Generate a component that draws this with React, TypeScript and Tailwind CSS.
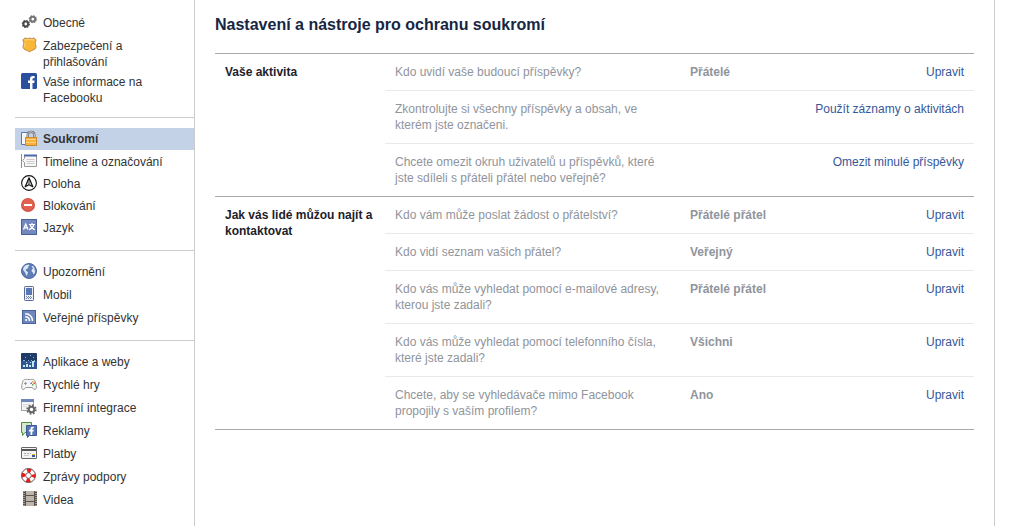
import type { ReactNode } from "react";

type NavItem = {
  label: string;
  icon: ReactNode;
  active?: boolean;
};

type Setting = {
  question: string;
  value?: string;
  action: string;
};

type SettingGroup = {
  title: string;
  settings: Setting[];
};

const Icon = ({ children }: { children: ReactNode }) => (
  <svg viewBox="0 0 16 16" className="-mt-px h-4 w-4 shrink-0" aria-hidden="true">
    {children}
  </svg>
);

const GearsIcon = () => (
  <Icon>
    <circle cx="4.8" cy="10" r="2.4" fill="none" stroke="#4c4c4c" strokeWidth="2" />
    <circle cx="4.8" cy="10" r="3.5" fill="none" stroke="#4c4c4c" strokeWidth="1.2" strokeDasharray="1.5 1.25" />
    <circle cx="11.8" cy="5.2" r="2.4" fill="none" stroke="#747474" strokeWidth="2" />
    <circle cx="11.8" cy="5.2" r="3.5" fill="none" stroke="#747474" strokeWidth="1.2" strokeDasharray="1.5 1.25" />
  </Icon>
);

const ShieldIcon = () => (
  <Icon>
    <path
      d="M4 .8 6 1.9 8.500 1 11 1.900 13 .8 15.200 3 14.200 5C14 7 15.300 8.500 14.900 10.500 14.300 13 11 12.800 8.500 14.800 6 12.800 2.700 13 2.100 10.500 1.700 8.500 3 7 2.800 5L1.800 3Z"
      fill="#f9b838"
      stroke="#c08a45"
      strokeLinejoin="round"
    />
    <path d="M3.500 3 8.500 2.500 13.500 3" fill="none" stroke="#fdd684" />
    <path d="M4 5.500C4 8 3.300 8.500 3.300 10" fill="none" stroke="#fdd684" />
  </Icon>
);

const FacebookIcon = () => (
  <Icon>
    <rect width="16" height="16" rx="1.5" fill="#2a4f9e" />
    <path d="M9 16V10H7V7.600H9V6C9 3.800 10.200 3 12 3H13.600V5.300H12.500C11.700 5.300 11.500 5.700 11.500 6.300V7.600H13.600L13.300 10H11.500V16Z" fill="#fff" />
  </Icon>
);

const LockIcon = () => (
  <Icon>
    <path d="M.5 2.500H7.500V14.500H.5Z" fill="#f3f6fb" stroke="#5b78b5" />
    <path d="M6.700 8V5C6.700 .8 13.300 .8 13.300 5V8" fill="none" stroke="#6b6b6b" strokeWidth="2.4" />
    <path d="M6.700 8V5C6.700 .8 13.300 .8 13.300 5V8" fill="none" stroke="#ddd" strokeWidth=".9" />
    <rect x="4.5" y="7.5" width="11" height="8" fill="#fbb03b" stroke="#c88a30" />
    <path d="M5 9.500H15M5 12.500H15" stroke="#fdd07f" />
  </Icon>
);

const TimelineIcon = () => (
  <Icon>
    <path d="M.5 1V15" stroke="#7b90c0" />
    <path d="M3.500 2.500H15.500V13.500H3.500V9.500L1.500 7.500 3.500 5.500Z" fill="#f7f7f7" stroke="#999" />
    <path d="M3 2.500H16" stroke="#4a67a8" strokeWidth="2" />
    <path d="M5.500 6.500H13.500M5.500 8.500H13.500M5.500 10.500H13.500" stroke="#ccc" />
  </Icon>
);

const LocationIcon = () => (
  <Icon>
    <circle cx="8" cy="8" r="7.4" fill="#fff" stroke="#111" strokeWidth="1.1" />
    <path d="M8 2.800 11.800 11.800 8 9.800 4.200 11.800Z" fill="#ddd" stroke="#111" strokeWidth="1.2" strokeLinejoin="round" />
    <path d="M8 4V9.500" stroke="#111" strokeWidth=".8" />
  </Icon>
);

const BlockIcon = () => (
  <Icon>
    <circle cx="7" cy="8" r="7" fill="#d65445" />
    <circle cx="7" cy="7.6" r="5.8" fill="#e2604e" />
    <rect x="3" y="7" width="8" height="2" fill="#fff" />
  </Icon>
);

const LanguageIcon = () => (
  <Icon>
    <rect x=".5" y=".5" width="15" height="15" fill="#7388bd" stroke="#47619f" />
    <path d="M2.500 10.500 4.700 5.200 7 10.500M3.500 8.800H6" fill="none" stroke="#fff" strokeWidth="1.3" />
    <path d="M8 5.500H14M11 4V5.500M9.300 6C10 8.500 11.500 9.800 13.800 10.800M12.700 6C12 8.500 10.500 9.800 8 10.800" fill="none" stroke="#fff" strokeWidth="1.1" />
  </Icon>
);

const GlobeIcon = () => (
  <Icon>
    <circle cx="8" cy="8" r="7.5" fill="#5f7db5" stroke="#4a679f" />
    <path d="M2.500 4.500 4.500 2.300 8 1.500 8.500 2.500 7 3.500 7.500 5 5.500 6 4.500 7 6 8.500 7 9.500 6.500 11 5.800 13 4.800 11 3.800 9 2 7Z" fill="#dfe7f3" />
    <path d="M10.500 3 12 3 13.800 5.500 13 6.200 14.300 7.500 13.800 10 12.500 11.500 11.800 9.500 10.500 8.300 10.800 6.500 12 5.500Z" fill="#dfe7f3" />
  </Icon>
);

const PhoneIcon = () => (
  <Icon>
    <rect x="3.5" y=".5" width="9" height="14" rx=".8" fill="#eef1f6" stroke="#5a6c93" />
    <rect x="5" y="2" width="6" height="7" fill="#5878b3" />
    <path d="M5 10.500H11M5 12.500H11" stroke="#7585a5" strokeDasharray="1 1" />
    <path d="M6 11.500H11" stroke="#7585a5" strokeDasharray="1 1" />
  </Icon>
);

const FeedIcon = () => (
  <Icon>
    <rect x="1.5" y="1.5" width="13" height="13" fill="#6f87bd" stroke="#47619f" />
    <circle cx="5.2" cy="11" r="1.1" fill="#fff" />
    <path d="M4.200 7.700C6.800 7.700 8.500 9.400 8.500 12M4.200 4.700C8.500 4.700 11.500 7.700 11.500 12" fill="none" stroke="#fff" strokeWidth="1.4" />
  </Icon>
);

const AppsIcon = () => (
  <Icon>
    <rect width="16" height="16" rx="1" fill="#203b68" />
    <rect y="8" width="16" height="8" fill="#2d578d" />
    <path
      d="M9 2H10V3H9ZM4 4H5V5H4ZM12 4H13V5H12ZM2 7H4V8H2ZM7 7H8V8H7ZM10 7H11V8H10ZM13 7H14V8H13Z"
      fill="#83b7df"
    />
    <path d="M2 12H4V14H2ZM5 11H7V14H5ZM5 9H6V10H5ZM8 12H10V14H8ZM9 9H10V10H9ZM11 8H14V9H13V14H11Z" fill="#c5e5f7" />
  </Icon>
);

const GamepadIcon = () => (
  <Icon>
    <path
      d="M4 3.500C5 2.800 5.500 3.500 6.500 3.500H9.500C10.500 3.500 11 2.800 12 3.500 14 3.500 14.500 6 15.200 9.500 16 13.500 13.500 14.500 12.200 12.500L11 11.500H5L3.800 12.500C2.500 14.500 0 13.500 .8 9.500 1.500 6 2 3.500 4 3.500Z"
      fill="#f6f6f6"
      stroke="#969696"
    />
    <path d="M3 7.500H6M4.500 6V9" stroke="#999" />
    <rect x="11" y="5" width="1.5" height="1.5" fill="#e6b72e" />
    <rect x="9.500" y="6.5" width="1.5" height="1.5" fill="#4c78c4" />
    <rect x="12.5" y="6.5" width="1.5" height="1.5" fill="#dc4e3f" />
    <rect x="11" y="8" width="1.5" height="1.5" fill="#59a647" />
  </Icon>
);

const IntegrationIcon = () => (
  <Icon>
    <rect x=".5" y=".5" width="12" height="11" fill="#f4f4f4" stroke="#a5a5a5" />
    <rect width="13" height="3" fill="#6d87bd" />
    <path d="M2 5.500H8M2 7.500H6" stroke="#ddd" />
    <circle cx="10.5" cy="10.5" r="2.8" fill="#fff" stroke="#666" strokeWidth="2" />
    <circle cx="10.5" cy="10.5" r="4.4" fill="none" stroke="#666" strokeWidth="1.6" strokeDasharray="1.728 1.728" />
  </Icon>
);

const AdsIcon = () => (
  <Icon>
    <path d="M.5 .5H10.500V10.500H4L1.500 13.500V10.500H.5Z" fill="#d5e9cc" stroke="#4f8f3d" />
    <path d="M5.500 3.500H15.500V13.500H8.500L6.500 15.500V13.500H5.500Z" fill="#5775b3" stroke="#3b5998" />
    <path d="M9.500 13V9.500H8V7.800H9.500V6.800C9.500 5.300 10.300 4.700 11.500 4.700H12.800V6.300H12C11.500 6.300 11.300 6.500 11.300 7V7.800H12.800L12.500 9.500H11.300V13Z" fill="#fff" />
  </Icon>
);

const CardIcon = () => (
  <Icon>
    <rect x=".5" y="2.5" width="15" height="11" rx=".5" fill="#f4f4f4" stroke="#666" />
    <rect x="1" y="4" width="14" height="2" fill="#555" />
    <path d="M3 8.500H10" stroke="#aaa" strokeDasharray="2 1" />
    <path d="M3 10.500H8" stroke="#ccc" />
    <rect x="11" y="9" width="3" height="1" fill="#f0b72f" />
    <rect x="11" y="10" width="3" height="2" fill="#3159a5" />
  </Icon>
);

const LifebuoyIcon = () => (
  <Icon>
    <circle cx="7.5" cy="7.5" r="4.8" fill="none" stroke="#fff" strokeWidth="4" />
    <circle cx="7.5" cy="7.5" r="4.8" fill="none" stroke="#e91c16" strokeWidth="4" strokeDasharray="3.770 3.770" strokeDashoffset="1.885" />
    <circle cx="7.5" cy="7.5" r="7" fill="none" stroke="#5c3434" strokeWidth=".9" />
    <circle cx="7.5" cy="7.5" r="2.8" fill="#fff" stroke="#704040" strokeWidth=".8" />
  </Icon>
);

const FilmIcon = () => (
  <Icon>
    <rect x="2" width="14" height="15" fill="#5b524c" />
    <rect x="5" width="8" height="4" fill="#bdb4ac" />
    <rect x="5" y="5" width="8" height="5" fill="#bdb4ac" />
    <rect x="5" y="11" width="8" height="4" fill="#bdb4ac" />
    <path d="M3 0V15M15 0V15" stroke="#e9e5e1" strokeDasharray="1 1" />
  </Icon>
);

const navGroups: NavItem[][] = [
  [
    { label: "Obecné", icon: <GearsIcon /> },
    { label: "Zabezpečení a přihlašování", icon: <ShieldIcon /> },
    { label: "Vaše informace na Facebooku", icon: <FacebookIcon /> },
  ],
  [
    { label: "Soukromí", icon: <LockIcon />, active: true },
    { label: "Timeline a označování", icon: <TimelineIcon /> },
    { label: "Poloha", icon: <LocationIcon /> },
    { label: "Blokování", icon: <BlockIcon /> },
    { label: "Jazyk", icon: <LanguageIcon /> },
  ],
  [
    { label: "Upozornění", icon: <GlobeIcon /> },
    { label: "Mobil", icon: <PhoneIcon /> },
    { label: "Veřejné příspěvky", icon: <FeedIcon /> },
  ],
  [
    { label: "Aplikace a weby", icon: <AppsIcon /> },
    { label: "Rychlé hry", icon: <GamepadIcon /> },
    { label: "Firemní integrace", icon: <IntegrationIcon /> },
    { label: "Reklamy", icon: <AdsIcon /> },
    { label: "Platby", icon: <CardIcon /> },
    { label: "Zprávy podpory", icon: <LifebuoyIcon /> },
    { label: "Videa", icon: <FilmIcon /> },
  ],
];

const settingGroups: SettingGroup[] = [
  {
    title: "Vaše aktivita",
    settings: [
      { question: "Kdo uvidí vaše budoucí příspěvky?", value: "Přátelé", action: "Upravit" },
      {
        question: "Zkontrolujte si všechny příspěvky a obsah, ve kterém jste označeni.",
        action: "Použít záznamy o aktivitách",
      },
      {
        question: "Chcete omezit okruh uživatelů u příspěvků, které jste sdíleli s přáteli přátel nebo veřejně?",
        action: "Omezit minulé příspěvky",
      },
    ],
  },
  {
    title: "Jak vás lidé můžou najít a kontaktovat",
    settings: [
      { question: "Kdo vám může poslat žádost o přátelství?", value: "Přátelé přátel", action: "Upravit" },
      { question: "Kdo vidí seznam vašich přátel?", value: "Veřejný", action: "Upravit" },
      {
        question: "Kdo vás může vyhledat pomocí e-mailové adresy, kterou jste zadali?",
        value: "Přátelé přátel",
        action: "Upravit",
      },
      {
        question: "Kdo vás může vyhledat pomocí telefonního čísla, které jste zadali?",
        value: "Všichni",
        action: "Upravit",
      },
      {
        question: "Chcete, aby se vyhledávače mimo Facebook propojily s vaším profilem?",
        value: "Ano",
        action: "Upravit",
      },
    ],
  },
];

const Sidebar = () => (
  <nav className="w-[179px] shrink-0 pt-3 pb-4">
    {navGroups.map((group, i) => {
      const hasActive = group.some((item) => item.active);
      return (
        <ul
          key={i}
          className={`${i > 0 ? "mt-[10px] border-t border-[#ccc] pt-[10px]" : ""} ${hasActive ? "pb-px" : ""}`}
        >
          {group.map((item) => (
            <li key={item.label} className={item.active ? "mb-px" : ""}>
              <a
                href="#"
                aria-current={item.active ? "page" : undefined}
                className={`flex items-start gap-[6px] pt-[3px] pr-5 pb-px pl-[6px] ${
                  hasActive ? "min-h-[22px]" : "min-h-[23px]"
                } ${item.active ? "bg-[#c4d2e7] font-bold" : "hover:bg-[#eff1f3]"}`}
              >
                {item.icon}
                <span>{item.label}</span>
              </a>
            </li>
          ))}
        </ul>
      );
    })}
  </nav>
);

const SettingsTable = () => (
  <table className="w-full table-fixed border-separate border-spacing-0 border-b border-[#aaa] text-left">
    <colgroup>
      <col className="w-[170px]" />
      <col className="w-[295px]" />
      <col className="w-[120px]" />
      <col />
    </colgroup>
    {settingGroups.map((group) => (
      <tbody key={group.title}>
        {group.settings.map((setting, i) => {
          const line = i === 0 ? "border-t border-[#aaa]" : "border-t border-[#e9e9e9]";
          return (
            <tr key={setting.question} className="align-top text-[#90949c]">
              {i === 0 && (
                <th
                  scope="rowgroup"
                  rowSpan={group.settings.length}
                  className="border-t border-[#aaa] py-[10px] pl-[10px] font-bold text-[#1d2129]"
                >
                  {group.title}
                </th>
              )}
              <td className={`${line} py-[10px] pr-4 pl-[10px]`}>{setting.question}</td>
              {setting.value && <td className={`${line} p-[10px] font-bold`}>{setting.value}</td>}
              <td colSpan={setting.value ? 1 : 2} className={`${line} p-[10px] text-right`}>
                <a href="#" className="text-[#365899] hover:underline">
                  {setting.action}
                </a>
              </td>
            </tr>
          );
        })}
      </tbody>
    ))}
  </table>
);

export default function App() {
  return (
    <div className="flex min-h-screen bg-white pr-[23px] pl-[15px] font-['Liberation_Sans',Arial,sans-serif] text-xs leading-4 text-[#333]">
      <Sidebar />
      <main className="min-w-0 flex-1 border-x border-[#ccc] px-5 pt-[15px] pb-5">
        <h1 className="mb-[18px] text-base leading-5 font-bold text-[#162643]">
          Nastavení a nástroje pro ochranu soukromí
        </h1>
        <SettingsTable />
      </main>
    </div>
  );
}
